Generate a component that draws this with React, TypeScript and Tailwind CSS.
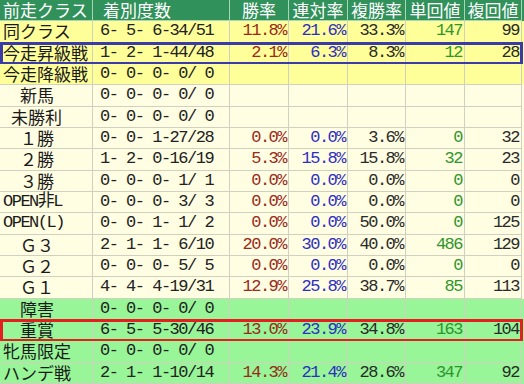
import React from 'react';

type Row = {
  label: string;
  indent?: 'full' | 'half';
  mono?: boolean;
  record: string;
  win?: string;
  ren?: string;
  fuku?: string;
  tan?: string;
  fukuKai?: string;
  bg: 'yellow' | 'cream' | 'green';
  box?: 'blue' | 'red';
};

const rows: Row[] = [
  { label: '同クラス', record: '6- 5- 6-34/51', win: '11.8%', ren: '21.6%', fuku: '33.3%', tan: '147', fukuKai: '99', bg: 'yellow' },
  { label: '今走昇級戦', record: '1- 2- 1-44/48', win: '2.1%', ren: '6.3%', fuku: '8.3%', tan: '12', fukuKai: '28', bg: 'yellow', box: 'blue' },
  { label: '今走降級戦', record: '0- 0- 0- 0/ 0', bg: 'yellow' },
  { label: '新馬', indent: 'full', record: '0- 0- 0- 0/ 0', bg: 'cream' },
  { label: '未勝利', indent: 'half', record: '0- 0- 0- 0/ 0', bg: 'cream' },
  { label: '１勝', indent: 'full', record: '0- 0- 1-27/28', win: '0.0%', ren: '0.0%', fuku: '3.6%', tan: '0', fukuKai: '32', bg: 'cream' },
  { label: '２勝', indent: 'full', record: '1- 2- 0-16/19', win: '5.3%', ren: '15.8%', fuku: '15.8%', tan: '32', fukuKai: '23', bg: 'cream' },
  { label: '３勝', indent: 'full', record: '0- 0- 0- 1/ 1', win: '0.0%', ren: '0.0%', fuku: '0.0%', tan: '0', fukuKai: '0', bg: 'cream' },
  { label: 'OPEN非L', mono: true, record: '0- 0- 0- 3/ 3', win: '0.0%', ren: '0.0%', fuku: '0.0%', tan: '0', fukuKai: '0', bg: 'cream' },
  { label: 'OPEN(L)', mono: true, record: '0- 0- 1- 1/ 2', win: '0.0%', ren: '0.0%', fuku: '50.0%', tan: '0', fukuKai: '125', bg: 'cream' },
  { label: 'Ｇ３', indent: 'full', record: '2- 1- 1- 6/10', win: '20.0%', ren: '30.0%', fuku: '40.0%', tan: '486', fukuKai: '129', bg: 'cream' },
  { label: 'Ｇ２', indent: 'full', record: '0- 0- 0- 5/ 5', win: '0.0%', ren: '0.0%', fuku: '0.0%', tan: '0', fukuKai: '0', bg: 'cream' },
  { label: 'Ｇ１', indent: 'full', record: '4- 4- 4-19/31', win: '12.9%', ren: '25.8%', fuku: '38.7%', tan: '85', fukuKai: '113', bg: 'cream' },
  { label: '障害', indent: 'full', record: '0- 0- 0- 0/ 0', bg: 'green' },
  { label: '重賞', indent: 'full', record: '6- 5- 5-30/46', win: '13.0%', ren: '23.9%', fuku: '34.8%', tan: '163', fukuKai: '104', bg: 'green', box: 'red' },
  { label: '牝馬限定', record: '0- 0- 0- 0/ 0', bg: 'green' },
  { label: 'ハンデ戦', record: '2- 1- 1-10/14', win: '14.3%', ren: '21.4%', fuku: '28.6%', tan: '347', fukuKai: '92', bg: 'green' },
];

const cols = 'grid grid-cols-[93px_137px_59px_59px_58px_59px_57px]';
const jp = "block font-['Noto_Sans_CJK_JP',sans-serif] text-[17px] leading-[20px] h-[20px] whitespace-nowrap";
const num = "block font-['Liberation_Mono','Noto_Sans_CJK_JP',monospace] text-[17px] tracking-[-1.5px] leading-[20px] h-[20px] whitespace-pre";

const bgClass = (bg: Row['bg']): string => {
  switch (bg) {
    case 'yellow':
      return 'bg-[#ffff99]';
    case 'green':
      return 'bg-[#98f598]';
    default:
      return 'bg-[#fffde2]';
  }
};

const Cell: React.FC<{ className?: string; children?: React.ReactNode }> = ({ className = '', children }) => (
  <div className={`flex items-center min-h-0 border-r border-b border-[#cfd0c0] ${className}`}>{children}</div>
);

const Value: React.FC<{ text?: string; color: string }> = ({ text, color }) => (
  <Cell className="justify-end pr-[2px]">
    {text && <span className={`${num} ${color}`}>{text}</span>}
  </Cell>
);

export default function App() {
  return (
    <div className="w-[524px] h-[384px] bg-white grid grid-rows-[repeat(18,minmax(0,1fr))] overflow-hidden">
      <div className={`${cols} bg-[#31915a] text-white`}>
        {['前走クラス', '着別度数', '勝率', '連対率', '複勝率', '単回値', '複回値'].map((h, i) => (
          <div
            key={h}
            className={`flex items-center border-r border-b border-[#a9d6b6] ${i === 0 ? 'pl-[3px]' : i === 1 ? 'pl-[10px]' : 'justify-center'}`}
          >
            <span className={jp}>{h}</span>
          </div>
        ))}
      </div>

      {rows.map((r) => (
        <div key={r.label} className={`${cols} relative ${bgClass(r.bg)}`}>
          <Cell className={r.indent === 'full' ? 'pl-[20px]' : r.indent === 'half' ? 'pl-[11px]' : 'pl-[3px]'}>
            <span className={`${r.mono ? num : jp} text-[#1a1a1a]`}>{r.label}</span>
          </Cell>
          <Cell className="pl-[7px]">
            <span className={`${num} text-[#222]`}>{r.record}</span>
          </Cell>
          <Value text={r.win} color="text-[#9a2a1a]" />
          <Value text={r.ren} color="text-[#2e2ec4]" />
          <Value text={r.fuku} color="text-[#2a2a2a]" />
          <Value text={r.tan} color="text-[#2f962f]" />
          <Value text={r.fukuKai} color="text-[#2a2a2a]" />
          {r.box === 'blue' && (
            <div className="absolute left-0 w-[523px] -top-px -bottom-px border-[3px] border-[#3a3aa8] pointer-events-none" />
          )}
          {r.box === 'red' && (
            <div className="absolute left-0 w-[523px] -top-px -bottom-px border-[3px] border-[#e41f1f] pointer-events-none" />
          )}
        </div>
      ))}
    </div>
  );
}
